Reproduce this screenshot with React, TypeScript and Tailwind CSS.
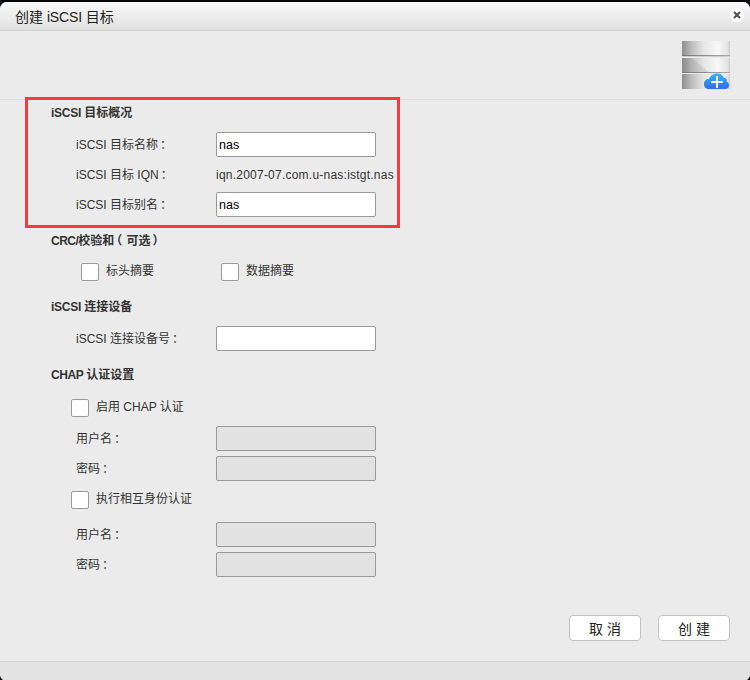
import type { ReactNode } from "react";

const inputBase =
  "mt-0.5 h-[25px] w-40 rounded-[2px] border border-[#999] px-[2px] text-[12.5px] outline-none";

function Colon() {
  return (
    <span className="relative top-px -left-px font-['Noto_Sans_CJK_TC',sans-serif]">：</span>
  );
}

function SectionTitle({ children, className }: { children: ReactNode; className: string }) {
  return <h2 className={`h-[25px] pl-[51px] font-bold leading-[27px] ${className}`}>{children}</h2>;
}

function Field({ label, children }: { label: string; children: ReactNode }) {
  return (
    <div className="flex h-[30px] items-start pl-[76px]">
      <label className="w-[140px] shrink-0 leading-[28px]">
        {label}
        <Colon />
      </label>
      {children}
    </div>
  );
}

function TextInput({ value = "", disabled = false }: { value?: string; disabled?: boolean }) {
  return (
    <input
      type="text"
      defaultValue={value}
      disabled={disabled}
      className={`${inputBase} ${disabled ? "bg-[#e2e2e2]" : "bg-white text-black"}`}
    />
  );
}

function Check({ label }: { label: string }) {
  return (
    <label className="flex h-[30px] items-start">
      <input
        type="checkbox"
        className="mt-[7px] mr-[7px] h-[18px] w-[18px] appearance-none rounded-[2px] border border-[#999] bg-white"
      />
      <span className="leading-[30px]">{label}</span>
    </label>
  );
}

function StorageIcon() {
  return (
    <svg width="48" height="48" viewBox="0 0 48 48">
      <defs>
        <linearGradient id="disk" x1="0" x2="1" y1="0" y2="0">
          <stop offset="0" stopColor="#8e8e8e" />
          <stop offset="0.2" stopColor="#bdbdbd" />
          <stop offset="0.45" stopColor="#e4e5e4" />
          <stop offset="0.75" stopColor="#f8f8f8" />
          <stop offset="0.95" stopColor="#e2e2e2" />
          <stop offset="1" stopColor="#cccccc" />
        </linearGradient>
        <linearGradient id="edge" x1="0" x2="1" y1="0" y2="0">
          <stop offset="0" stopColor="#777" />
          <stop offset="1" stopColor="#aaa" />
        </linearGradient>
        <linearGradient id="cloud" x1="0" x2="0" y1="0" y2="1">
          <stop offset="0" stopColor="#31b5f5" />
          <stop offset="1" stopColor="#3568f5" />
        </linearGradient>
      </defs>
      <rect width="48" height="15" fill="url(#disk)" />
      <rect y="14" width="48" height="1" fill="url(#edge)" />
      <rect y="15" width="48" height="1" fill="#d0d0d0" />
      <rect y="17" width="48" height="15" fill="url(#disk)" />
      <path d="M0 17L9 17L27 31L0 31Z" fill="#777" opacity="0.15" />
      <rect y="31" width="48" height="1" fill="url(#edge)" />
      <rect y="33" width="48" height="15" fill="url(#disk)" />
      <path
        d="M27 48C24 48 22 46 22 43C22 40 24 38 27 38C28 35 31 32.5 35 32.5C39 32.5 41 34.5 42 37C45 37 45 39 44.5 40.5C46 41 47 42.5 47 44C47 46.500 45.500 48 43 48Z"
        fill="url(#cloud)"
      />
      <path d="M35 35v12M29 41h12" stroke="#fff" strokeWidth="2" />
    </svg>
  );
}

function DialogButton({ children }: { children: ReactNode }) {
  return (
    <button className="h-[26px] w-[72px] rounded-[4px] border border-[#c2c2c2] bg-white pt-px text-[14px] leading-6 text-[#222]">
      {children}
    </button>
  );
}

export default function App() {
  return (
    <div className="h-[680px] w-[750px] overflow-hidden bg-[#050608] pt-0.5 font-['Liberation_Sans','Noto_Sans_CJK_SC',sans-serif] text-[12px] text-[#333]">
      <div className="relative flex h-[679px] flex-col overflow-hidden rounded-[7px] bg-[#ebebeb]">
        <header className="flex h-[29px] shrink-0 items-center justify-between border-b border-[#d5d5d5] bg-linear-to-b from-[#f8f8f8] to-[#e1e1e1] pr-1.5 pl-[15px]">
          <h1 className="pt-px text-[14px] leading-7 text-[#222]">
            创建 <span className="tracking-[-0.15px]">iSCSI </span>目标
          </h1>
          <button aria-label="关闭" className="mb-0.5 grid h-[14px] w-[14px] place-items-center rounded-full bg-white">
            <svg width="8" height="8" viewBox="0 0 8 8">
              <path d="M1 1L7 7M7 1L1 7" stroke="#555" strokeWidth="2.200" />
            </svg>
          </button>
        </header>

        <div className="flex h-[69px] shrink-0 justify-end border-b border-[#dfdfdf] pt-2.5 pr-5">
          <StorageIcon />
        </div>

        <main className="flex-1">
          <SectionTitle className="mb-[5px]">
            <span className="tracking-[-0.25px]">iSCSI </span>目标概况
          </SectionTitle>
          <Field label="iSCSI 目标名称">
            <TextInput value="nas" />
          </Field>
          <Field label="iSCSI 目标 IQN">
            <span className="leading-[30px] tracking-[0.23px]">iqn.2007-07.com.u-nas:istgt.nas</span>
          </Field>
          <Field label="iSCSI 目标别名">
            <TextInput value="nas" />
          </Field>

          <SectionTitle className="mt-2 mb-[3px]">
            <span className="tracking-[-0.5px]">CRC/</span>校验和
            <span className="mr-1 ml-0.5 [font-feature-settings:'halt']">（</span>可选
            <span className="ml-0.5 [font-feature-settings:'halt']">）</span>
          </SectionTitle>
          <div className="flex pl-[81px]">
            <div className="w-[140px]">
              <Check label="标头摘要" />
            </div>
            <Check label="数据摘要" />
          </div>

          <SectionTitle className="mt-2 mb-[5px]">
            <span className="tracking-[-0.25px]">iSCSI </span>连接设备
          </SectionTitle>
          <Field label="iSCSI 连接设备号">
            <TextInput />
          </Field>

          <SectionTitle className="mt-2 mb-[5px]">
            <span className="tracking-[-0.4px]">CHAP </span>认证设置
          </SectionTitle>
          <div className="mb-0.5 pl-[71px]">
            <Check label="启用 CHAP 认证" />
          </div>
          <Field label="用户名">
            <TextInput disabled />
          </Field>
          <Field label="密码">
            <TextInput disabled />
          </Field>
          <div className="mb-1.5 pl-[71px]">
            <Check label="执行相互身份认证" />
          </div>
          <Field label="用户名">
            <TextInput disabled />
          </Field>
          <Field label="密码">
            <TextInput disabled />
          </Field>

          <div className="mt-[35px] flex justify-end gap-[17px] pr-5">
            <DialogButton>取 消</DialogButton>
            <DialogButton>创 建</DialogButton>
          </div>
        </main>

        <footer className="h-5 shrink-0 border-t border-[#d5d5d5] bg-[#e3e3e3]" />

        {/* highlight around the target overview */}
        <div className="pointer-events-none absolute top-[95px] left-[25px] h-[131px] w-[375px] border-3 border-[#fb3b3b]" />
      </div>
    </div>
  );
}
